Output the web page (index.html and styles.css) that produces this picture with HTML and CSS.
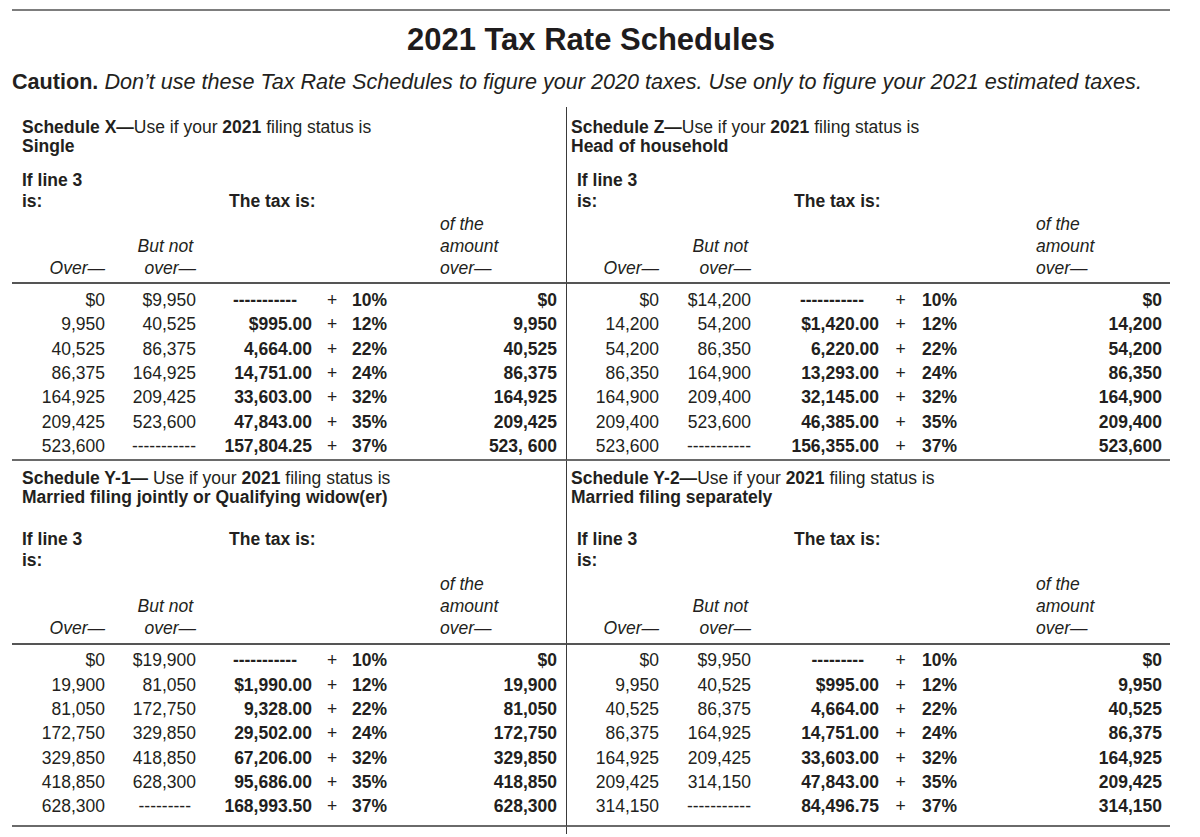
FILE: index.html
```html
<!DOCTYPE html>
<html lang="en">
<head>
<meta charset="utf-8">
<title>2021 Tax Rate Schedules</title>
<link rel="stylesheet" href="styles.css">
</head>
<body>
<div class="page">
  <h1 class="title">2021 Tax Rate Schedules</h1>
  <p class="caution"><b>Caution.</b> <i>Don’t use these Tax Rate Schedules to figure your 2020 taxes. Use only to figure your 2021 estimated taxes.</i></p>

  <div class="schedules">
    <!-- Schedule X header -->
    <div class="head left first">
      <p class="sched"><b>Schedule X—</b>Use if your <b>2021</b> filing status is<br><b>Single</b></p>
      <div class="ifline down"><p class="if">If line 3<br>is:</p><p class="taxis">The tax is:</p></div>
      <div class="labels"><span class="l-over">Over—</span><span class="l-bn"><span class="bn">But not</span><br>over—</span><span></span><span class="l-of">of the<br>amount<br>over—</span></div>
    </div>
    <!-- Schedule Z header -->
    <div class="head right first">
      <p class="sched"><b>Schedule Z—</b>Use if your <b>2021</b> filing status is<br><b>Head of household</b></p>
      <div class="ifline down"><p class="if">If line 3<br>is:</p><p class="taxis">The tax is:</p></div>
      <div class="labels"><span class="l-over">Over—</span><span class="l-bn"><span class="bn">But not</span><br>over—</span><span></span><span class="l-of">of the<br>amount<br>over—</span></div>
    </div>

    <!-- Schedule X data -->
    <div class="data left upper">
      <div class="row"><span>$0</span><span>$9,950</span><span class="tax"><span class="dash">-----------</span></span><span class="plus">+</span><span class="pct">10%</span><span class="amt">$0</span></div>
      <div class="row"><span>9,950</span><span>40,525</span><span class="tax">$995.00</span><span class="plus">+</span><span class="pct">12%</span><span class="amt">9,950</span></div>
      <div class="row"><span>40,525</span><span>86,375</span><span class="tax">4,664.00</span><span class="plus">+</span><span class="pct">22%</span><span class="amt">40,525</span></div>
      <div class="row"><span>86,375</span><span>164,925</span><span class="tax">14,751.00</span><span class="plus">+</span><span class="pct">24%</span><span class="amt">86,375</span></div>
      <div class="row"><span>164,925</span><span>209,425</span><span class="tax">33,603.00</span><span class="plus">+</span><span class="pct">32%</span><span class="amt">164,925</span></div>
      <div class="row"><span>209,425</span><span>523,600</span><span class="tax">47,843.00</span><span class="plus">+</span><span class="pct">35%</span><span class="amt">209,425</span></div>
      <div class="row"><span>523,600</span><span>-----------</span><span class="tax">157,804.25</span><span class="plus">+</span><span class="pct">37%</span><span class="amt">523, 600</span></div>
    </div>
    <!-- Schedule Z data -->
    <div class="data right upper">
      <div class="row"><span>$0</span><span>$14,200</span><span class="tax"><span class="dash">-----------</span></span><span class="plus">+</span><span class="pct">10%</span><span class="amt">$0</span></div>
      <div class="row"><span>14,200</span><span>54,200</span><span class="tax">$1,420.00</span><span class="plus">+</span><span class="pct">12%</span><span class="amt">14,200</span></div>
      <div class="row"><span>54,200</span><span>86,350</span><span class="tax">6,220.00</span><span class="plus">+</span><span class="pct">22%</span><span class="amt">54,200</span></div>
      <div class="row"><span>86,350</span><span>164,900</span><span class="tax">13,293.00</span><span class="plus">+</span><span class="pct">24%</span><span class="amt">86,350</span></div>
      <div class="row"><span>164,900</span><span>209,400</span><span class="tax">32,145.00</span><span class="plus">+</span><span class="pct">32%</span><span class="amt">164,900</span></div>
      <div class="row"><span>209,400</span><span>523,600</span><span class="tax">46,385.00</span><span class="plus">+</span><span class="pct">35%</span><span class="amt">209,400</span></div>
      <div class="row"><span>523,600</span><span>-----------</span><span class="tax">156,355.00</span><span class="plus">+</span><span class="pct">37%</span><span class="amt">523,600</span></div>
    </div>

    <!-- Schedule Y-1 header -->
    <div class="head left second">
      <p class="sched"><b>Schedule Y-1—</b> Use if your <b>2021</b> filing status is<br><b>Married filing jointly or Qualifying widow(er)</b></p>
      <div class="ifline up"><p class="if">If line 3<br>is:</p><p class="taxis">The tax is:</p></div>
      <div class="labels"><span class="l-over">Over—</span><span class="l-bn"><span class="bn">But not</span><br>over—</span><span></span><span class="l-of">of the<br>amount<br>over—</span></div>
    </div>
    <!-- Schedule Y-2 header -->
    <div class="head right second">
      <p class="sched"><b>Schedule Y-2—</b>Use if your <b>2021</b> filing status is<br><b>Married filing separately</b></p>
      <div class="ifline up"><p class="if">If line 3<br>is:</p><p class="taxis">The tax is:</p></div>
      <div class="labels"><span class="l-over">Over—</span><span class="l-bn"><span class="bn">But not</span><br>over—</span><span></span><span class="l-of">of the<br>amount<br>over—</span></div>
    </div>

    <!-- Schedule Y-1 data -->
    <div class="data left lower">
      <div class="row"><span>$0</span><span>$19,900</span><span class="tax"><span class="dash">-----------</span></span><span class="plus">+</span><span class="pct">10%</span><span class="amt">$0</span></div>
      <div class="row"><span>19,900</span><span>81,050</span><span class="tax">$1,990.00</span><span class="plus">+</span><span class="pct">12%</span><span class="amt">19,900</span></div>
      <div class="row"><span>81,050</span><span>172,750</span><span class="tax">9,328.00</span><span class="plus">+</span><span class="pct">22%</span><span class="amt">81,050</span></div>
      <div class="row"><span>172,750</span><span>329,850</span><span class="tax">29,502.00</span><span class="plus">+</span><span class="pct">24%</span><span class="amt">172,750</span></div>
      <div class="row"><span>329,850</span><span>418,850</span><span class="tax">67,206.00</span><span class="plus">+</span><span class="pct">32%</span><span class="amt">329,850</span></div>
      <div class="row"><span>418,850</span><span>628,300</span><span class="tax">95,686.00</span><span class="plus">+</span><span class="pct">35%</span><span class="amt">418,850</span></div>
      <div class="row"><span>628,300</span><span class="shortdash">---------</span><span class="tax">168,993.50</span><span class="plus">+</span><span class="pct">37%</span><span class="amt">628,300</span></div>
    </div>
    <!-- Schedule Y-2 data -->
    <div class="data right lower">
      <div class="row"><span>$0</span><span>$9,950</span><span class="tax"><span class="dash">---------</span></span><span class="plus">+</span><span class="pct">10%</span><span class="amt">$0</span></div>
      <div class="row"><span>9,950</span><span>40,525</span><span class="tax">$995.00</span><span class="plus">+</span><span class="pct">12%</span><span class="amt">9,950</span></div>
      <div class="row"><span>40,525</span><span>86,375</span><span class="tax">4,664.00</span><span class="plus">+</span><span class="pct">22%</span><span class="amt">40,525</span></div>
      <div class="row"><span>86,375</span><span>164,925</span><span class="tax">14,751.00</span><span class="plus">+</span><span class="pct">24%</span><span class="amt">86,375</span></div>
      <div class="row"><span>164,925</span><span>209,425</span><span class="tax">33,603.00</span><span class="plus">+</span><span class="pct">32%</span><span class="amt">164,925</span></div>
      <div class="row"><span>209,425</span><span>314,150</span><span class="tax">47,843.00</span><span class="plus">+</span><span class="pct">35%</span><span class="amt">209,425</span></div>
      <div class="row"><span>314,150</span><span>-----------</span><span class="tax">84,496.75</span><span class="plus">+</span><span class="pct">37%</span><span class="amt">314,150</span></div>
    </div>

    <div class="tail right"></div>
  </div>
</div>
</body>
</html>
```

FILE: styles.css
```css
* {
  box-sizing: border-box;
  margin: 0;
  padding: 0;
}

html, body {
  background: #ffffff;
}

body {
  color: #231f20;
  font-family: "Liberation Sans", Arial, Helvetica, sans-serif;
  font-size: 17.5px;
}

.page {
  margin: 9px 0 0 12px;
  width: 1158px;
  border-top: 2px solid #7d7d7d;
}

.title {
  font-size: 31px;
  font-weight: 700;
  line-height: 36px;
  text-align: center;
  margin-top: 11px;
  color: #1f1c1d;
}

.caution {
  font-size: 21.6px;
  line-height: 26px;
  margin-top: 11px;
  margin-bottom: 12px;
  white-space: nowrap;
}

.caution b {
  font-weight: 700;
}

.schedules {
  display: grid;
  grid-template-columns: 554px 604px;
}

.right {
  border-left: 1.5px solid #3a3a3a;
}

.left {
  --c1: 93px;
  --c2: 91px;
  --c3: 116px;
  --c4: 40px;
  --c5: 60px;
  --c6: 145px;
  --taxis: 217px;
  --ofthe: 244px;
  --sched-pad: 10px;
}

.right {
  --c1: 92px;
  --c2: 92px;
  --c3: 128px;
  --c4: 43px;
  --c5: 60px;
  --c6: 180px;
  --taxis: 227px;
  --ofthe: 285px;
  --sched-pad: 4px;
}

/* ---------- headers ---------- */
.head {
  display: flex;
  flex-direction: column;
  padding-bottom: 3px;
}

.head.first {
  padding-top: 11px;
}

.head.second {
  padding-top: 8px;
  padding-bottom: 4px;
}

.sched {
  line-height: 18.5px;
  padding-left: var(--sched-pad);
  white-space: nowrap;
}

.ifline {
  display: grid;
  grid-template-columns: var(--taxis) auto;
  font-weight: 700;
  line-height: 20.5px;
  padding-left: 10px;
}

.first .ifline {
  margin-top: 15px;
}

.second .ifline {
  margin-top: 23px;
}

.ifline .if {
  grid-column: 1;
}

.ifline .taxis {
  grid-column: 2;
  margin-left: -10px;
}

.ifline.down .taxis {
  align-self: end;
}

.ifline.up .taxis {
  align-self: start;
}

.labels {
  display: grid;
  grid-template-columns: var(--c1) var(--c2) var(--ofthe) auto;
  font-style: italic;
  line-height: 22px;
  margin-top: 2px;
}

.second .labels {
  margin-top: 3px;
}

.l-over {
  align-self: end;
  text-align: right;
}

.l-bn {
  align-self: end;
  text-align: right;
}

.bn {
  padding-right: 3px;
}

.l-of {
  text-align: left;
}

/* ---------- data ---------- */
.data {
  border-top: 2px solid #555555;
  border-bottom: 2px solid #6a6a6a;
}

.data.upper {
  padding-top: 4px;
  padding-bottom: 1px;
}

.data.lower {
  padding-top: 3px;
  padding-bottom: 6px;
}

.row {
  display: grid;
  grid-template-columns: var(--c1) var(--c2) var(--c3) var(--c4) var(--c5) var(--c6);
  line-height: 24.33px;
  white-space: nowrap;
}

.row > span {
  text-align: right;
}

.row > .tax {
  font-weight: 700;
}

.row > .plus {
  text-align: center;
}

.row > .pct {
  text-align: left;
  font-weight: 700;
}

.row > .amt {
  font-weight: 700;
}

.dash {
  display: inline-block;
  margin-right: 15px;
}

.shortdash {
  padding-right: 5px;
}

.tail {
  grid-column: 2;
  height: 7px;
}
```
